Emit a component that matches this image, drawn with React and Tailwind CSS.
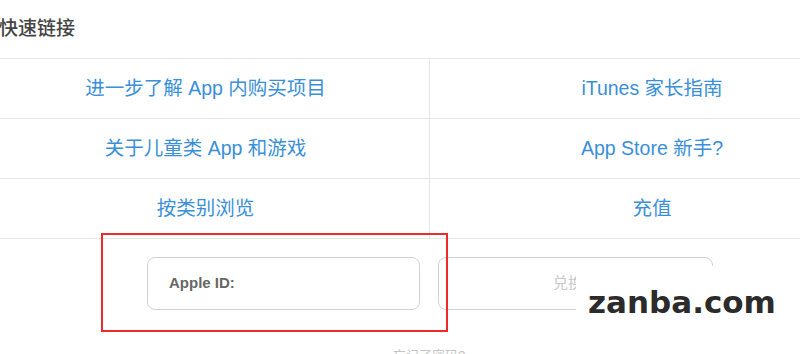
const links = [
  ['进一步了解 App 内购买项目', 'iTunes 家长指南'],
  ['关于儿童类 App 和游戏', 'App Store 新手?'],
  ['按类别浏览', '充值'],
];

export default function App() {
  return (
    <div
      className="relative w-[800px] h-[354px] overflow-hidden bg-white"
      style={{ fontFamily: '"Liberation Sans", "Noto Sans CJK SC", sans-serif' }}
    >
      <div className="h-[58px] flex items-center text-[19px] font-medium text-[#444] -ml-[1px]">快速链接</div>

      <div className="grid grid-cols-[430px_370px] border-t border-[#e6e6e6]">
        {links.map(([left, right]) => (
          <div key={left} className="contents">
            <div className="h-[60px] flex items-center justify-center pr-[18px] border-b border-r border-[#e6e6e6] text-[19.5px] text-[#3a8fd9]">
              {left}
            </div>
            <div className="h-[60px] flex items-center justify-center pl-[74px] border-b border-[#e6e6e6] text-[19.5px] text-[#3a8fd9]">
              {right}
            </div>
          </div>
        ))}
      </div>

      <div className="flex gap-[18px] pl-[147px] pt-[18px]">
        <div className="w-[273px] h-[53px] rounded-[8px] border border-[#d2d2d2] flex items-center pl-[21px] text-[15px] font-semibold text-[#666]">
          Apple ID:
        </div>
        <div className="w-[275px] h-[53px] rounded-[8px] border border-[#d2d2d2] flex items-center justify-center text-[15px] text-[#c8c8c8]">
          兑换码
        </div>
      </div>

      <div className="pl-[393px] pt-[36px] text-[13px] text-[#c4c4c4]">忘记了密码?</div>

      {/* annotation */}
      <div className="absolute left-[101px] top-[233px] w-[347px] h-[99px] border-2 border-[#ee2a2a]" />

      {/* watermark */}
      <div className="absolute left-[576px] top-[266px] w-[224px] h-[64px] bg-white flex items-center pl-[12px] pt-[8px]">
        <span
          className="text-[31px] font-black text-[#2b2b2b] leading-none"
          style={{ fontFamily: '"DejaVu Sans", sans-serif' }}
        >
          zanba.com
        </span>
      </div>
    </div>
  );
}
